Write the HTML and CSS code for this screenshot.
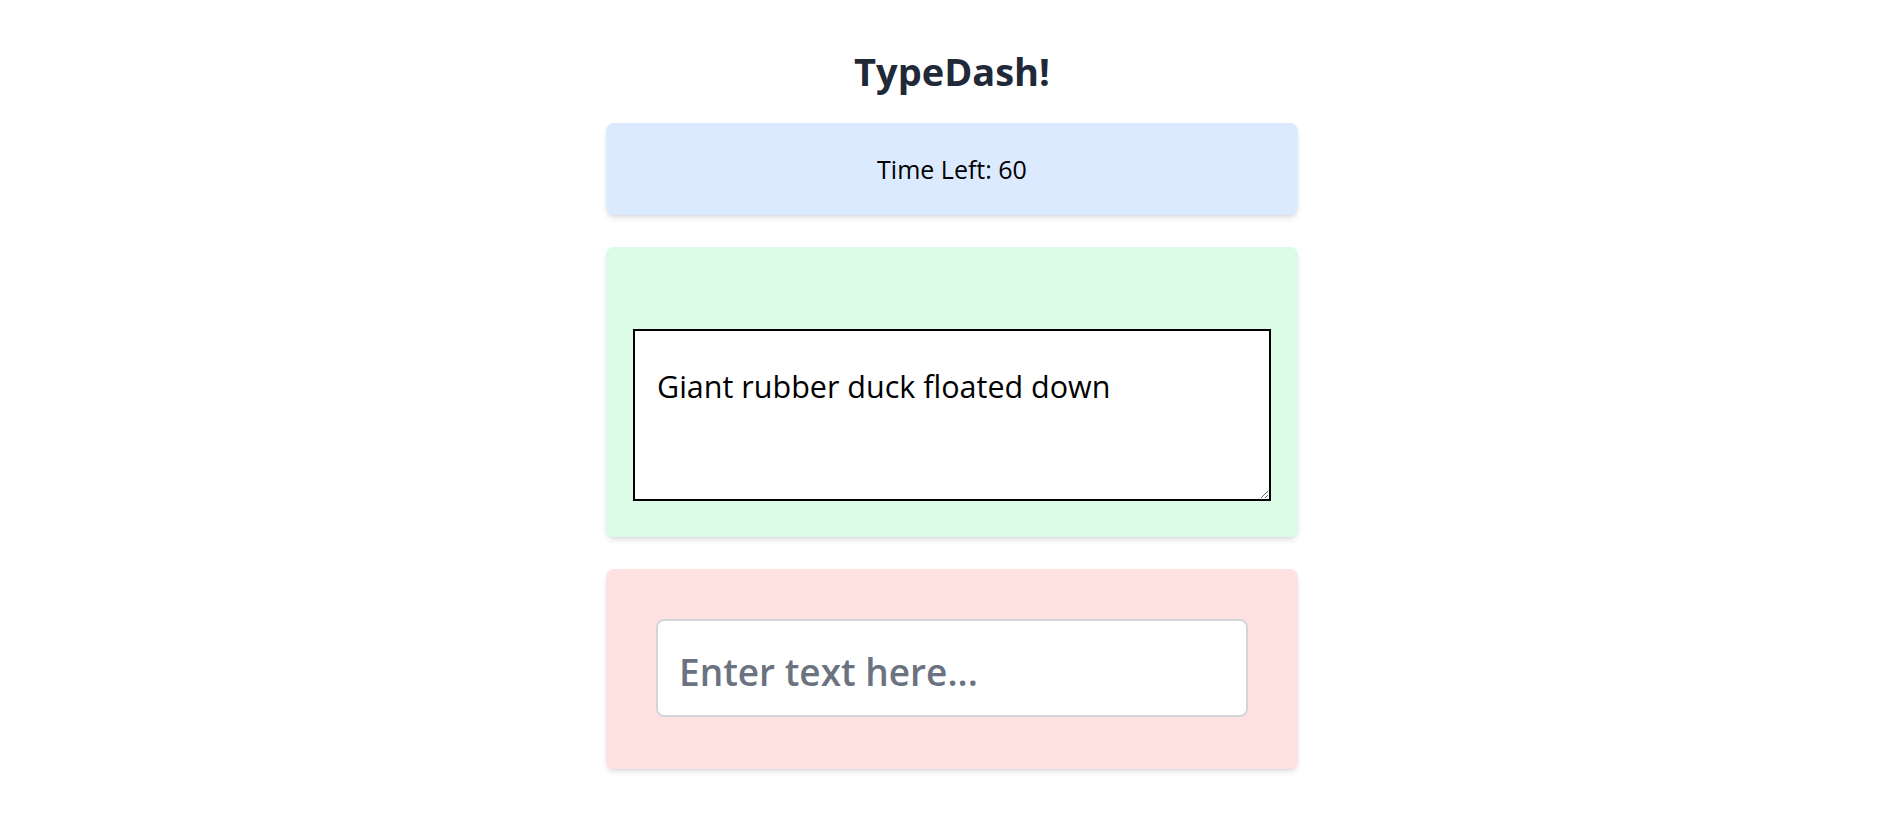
FILE: index.html
```html
<!DOCTYPE html>
<html lang="en">
<head>
<meta charset="utf-8">
<title>TypeDash!</title>
<link rel="stylesheet" href="styles.css">
</head>
<body>
<main class="app">
  <h1 class="title">TypeDash!</h1>
  <section class="card card-timer">
    <p class="timer">Time Left: 60</p>
  </section>
  <section class="card card-prompt">
    <textarea class="prompt" readonly>Giant rubber duck floated down</textarea>
  </section>
  <section class="card card-input">
    <input class="typing" type="text" placeholder="Enter text here...">
  </section>
</main>
</body>
</html>
```
FILE: styles.css
```css
* { box-sizing: border-box; }
html, body { margin: 0; padding: 0; background: #ffffff; }
body { font-family: "Open Sans", "Noto Sans", sans-serif; color: #000; }

.app {
  width: 692px;
  margin: 0 auto;
  padding-top: 44px;
  padding-bottom: 40px;
  display: flex;
  flex-direction: column;
  gap: 32px;
}

.title {
  margin: 0 0 -8px 0;
  text-align: center;
  font-size: 38px;
  line-height: 55px;
  font-weight: 700;
  color: #1f2937;
}

.card {
  border-radius: 8px;
  box-shadow: 0 4px 6px -1px rgba(0,0,0,0.1), 0 2px 4px -2px rgba(0,0,0,0.1);
}

.card-timer {
  background: #dbeafe;
  height: 92px;
  display: flex;
  align-items: center;
  justify-content: center;
}
.timer {
  margin: 0;
  font-size: 25px;
  line-height: 28px;
}

.card-prompt {
  background: #dcfce7;
  height: 290px;
  padding: 82px 27px 0 27px;
}
.prompt {
  display: block;
  width: 638px;
  height: 172px;
  border: 2px solid #000;
  border-radius: 0;
  padding: 37px 20px 0 22px;
  font-family: "Open Sans", "Noto Sans", sans-serif;
  font-size: 30.5px;
  line-height: 36px;
  color: #000;
  background: #fff;
  resize: vertical;
  outline: none;
}

.card-input {
  background: #fee2e2;
  height: 200px;
  padding: 50px;
}
.typing {
  display: block;
  width: 592px;
  height: 98px;
  border: 2px solid #d1d5db;
  border-radius: 8px;
  padding: 6px 20px 0 21px;
  font-family: "Open Sans", "Noto Sans", sans-serif;
  font-size: 37px;
  font-weight: 600;
  color: #000;
  background: #fff;
  outline: none;
}
.typing::placeholder { color: #6b7280; opacity: 1; }
```
